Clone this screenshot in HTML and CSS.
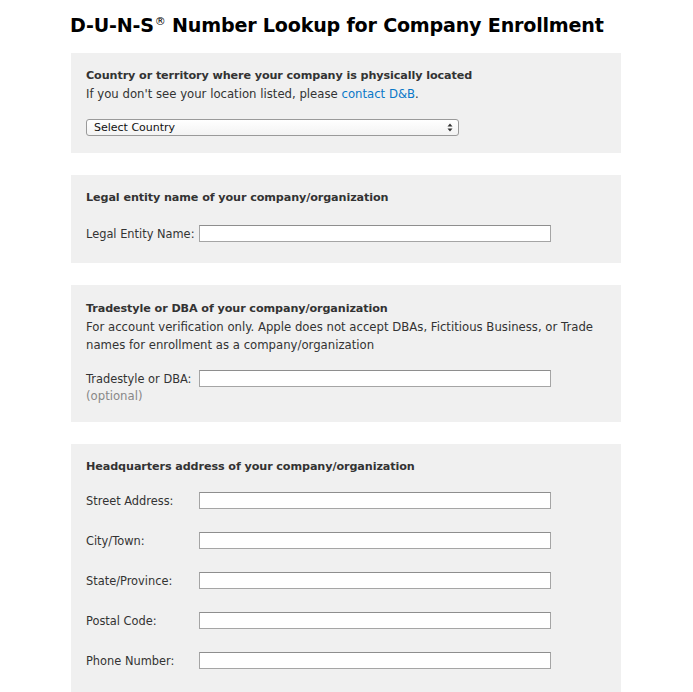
FILE: index.html
```html
<!DOCTYPE html>
<html>
<head>
<meta charset="utf-8">
<link rel="stylesheet" href="styles.css">
</head>
<body>
<div class="page">
  <h1 class="title">D-U-N-S<sup class="reg">®</sup> Number Lookup for Company Enrollment</h1>

  <section class="panel p1">
    <div class="heading">Country or territory where your company is physically located</div>
    <div class="desc">If you don't see your location listed, please <a class="link" href="#">contact D&amp;B</a>.</div>
    <div class="select">
      <span>Select Country</span>
      <svg class="arrows" width="6" height="9" viewBox="0 0 6 9"><path d="M0.5 3.5 L3 0.5 L5.5 3.5 Z M0.5 5.5 L3 8.5 L5.5 5.5 Z" fill="#333"/></svg>
    </div>
  </section>

  <section class="panel p2">
    <div class="heading">Legal entity name of your company/organization</div>
    <div class="row">
      <label class="lbl">Legal Entity Name:</label>
      <div class="input"></div>
    </div>
  </section>

  <section class="panel p3">
    <div class="heading">Tradestyle or DBA of your company/organization</div>
    <div class="desc">For account verification only. Apple does not accept DBAs, Fictitious Business, or Trade names for enrollment as a company/organization</div>
    <div class="row">
      <label class="lbl">Tradestyle or DBA:</label>
      <div class="input"></div>
    </div>
    <div class="optional">(optional)</div>
  </section>

  <section class="panel p4">
    <div class="heading">Headquarters address of your company/organization</div>
    <div class="row"><label class="lbl">Street Address:</label><div class="input"></div></div>
    <div class="row"><label class="lbl">City/Town:</label><div class="input"></div></div>
    <div class="row"><label class="lbl">State/Province:</label><div class="input"></div></div>
    <div class="row"><label class="lbl">Postal Code:</label><div class="input"></div></div>
    <div class="row"><label class="lbl">Phone Number:</label><div class="input"></div></div>
  </section>
</div>
</body>
</html>
```

FILE: styles.css
```css
* { box-sizing: border-box; }
html, body { margin: 0; padding: 0; background: #fff; }
body {
  font-family: "DejaVu Sans", "Liberation Sans", sans-serif;
  font-size: 11.7px;
  color: #333;
}
.page {
  width: 550px;
  margin-left: 71px;
  padding-top: 13px;
}
.title {
  margin: 0 0 14px -1px;
  font-size: 19.1px;
  line-height: 26px;
  font-weight: bold;
  color: #000;
  letter-spacing: -0.2px;
  white-space: nowrap;
}
.reg {
  font-size: 11px;
  font-weight: normal;
  vertical-align: 7px;
  line-height: 0;
  margin-left: 1px;
}
.panel {
  background: #f0f0f0;
  padding: 14px 15px 18px 15px;
  margin-bottom: 22px;
  line-height: 18px;
}
.heading { font-weight: bold; font-size: 11.2px; letter-spacing: -0.1px; }
.link { color: #0a78c8; text-decoration: none; }
.select {
  margin-top: 16px;
  width: 373px;
  height: 17px;
  border: 1px solid #9a9a9a;
  border-radius: 3px;
  background: linear-gradient(#fff, #f3f3f3);
  display: flex;
  align-items: center;
  justify-content: space-between;
  padding: 0 5px 0 7px;
  font-size: 11px;
  color: #111;
  line-height: 15px;
}
.arrows { display: block; }
.p1 { padding-bottom: 17px; }
.row {
  display: flex;
  align-items: center;
  margin-top: 16px;
  height: 17px;
}
.row + .row { margin-top: 23px; }
.lbl { width: 113px; flex: none; font-size: 11.4px; }
.input {
  width: 352px;
  height: 17px;
  background: #fff;
  border: 1px solid #a5a5a5;
  border-top-color: #8e8e8e;
}
.p2 { padding-top: 14px; padding-bottom: 21px; }
.p2 .row { margin-top: 18px; }
.optional { color: #888; }
.p3 { padding-top: 15px; padding-bottom: 17px; }
.p4 { padding-top: 14px; padding-bottom: 30px; margin-bottom: 0; }
```
